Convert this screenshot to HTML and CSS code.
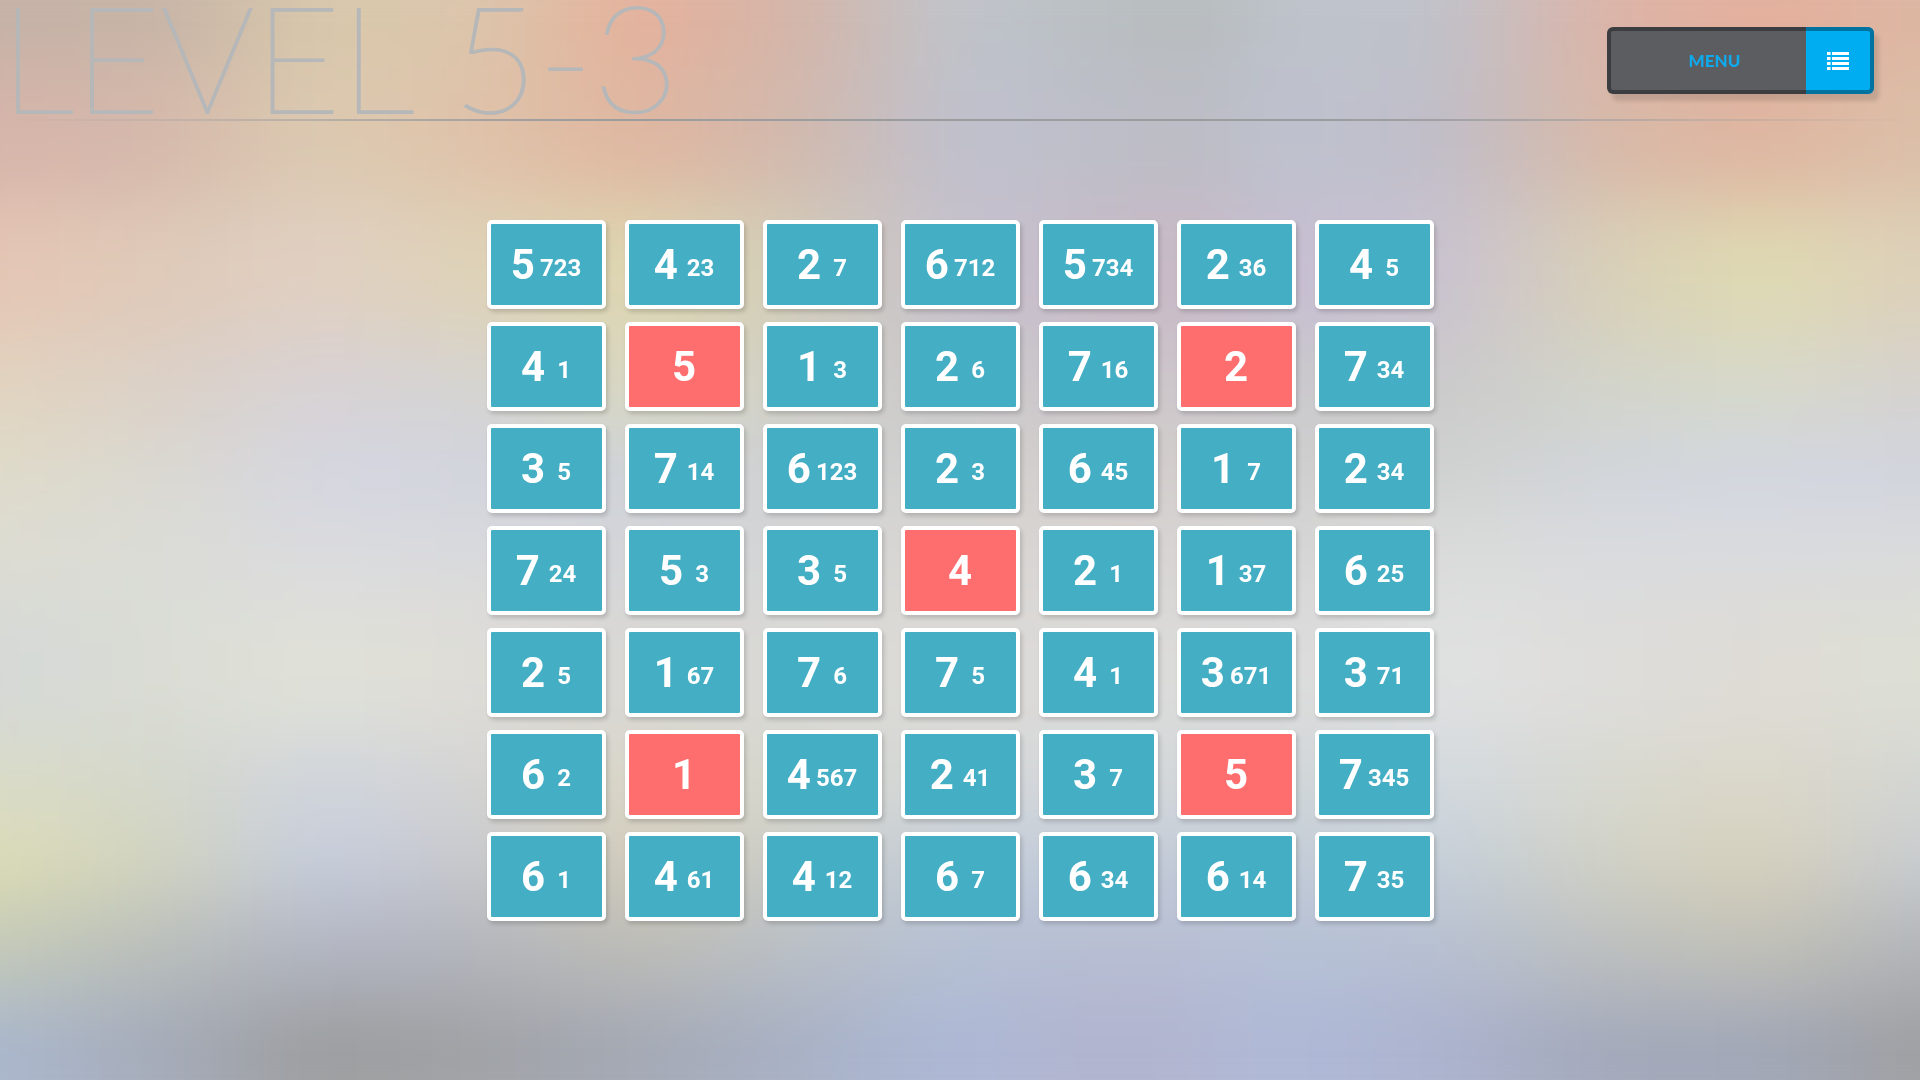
FILE: index.html
```html
<!DOCTYPE html>
<html lang="en">
<head>
<meta charset="utf-8">
<meta name="viewport" content="width=device-width, initial-scale=1">
<title>Level 5-3</title>
<link rel="stylesheet" href="styles.css">
</head>
<body>
<div class="backdrop" aria-hidden="true">
<div class="band band-1"></div><div class="band band-2"></div><div class="band band-3"></div>
<div class="band band-4"></div><div class="band band-5"></div><div class="band band-6"></div>
<div class="band band-7"></div><div class="band band-8"></div><div class="band band-9"></div>
<div class="band band-10"></div><div class="band band-11"></div>
</div>
<header class="header">
<h1 class="title">LEVEL 5-3</h1>
<button class="menu" type="button">
<span class="menu-label">MENU</span>
<span class="menu-icon">
<svg width="22" height="18" viewBox="0 0 22 18" fill="#fff" aria-hidden="true"><path d="M0 0h3.600v3H0zM5 0h17v3H5zM0 5h3.600v3H0zM5 5h17v3H5zM0 10h3.600v3H0zM5 10h17v3H5zM0 15h3.600v3H0zM5 15h17v3H5z"/></svg>
</span>
</button>
</header>
<main class="board">
<button class="tile" type="button">5<span class="moves three">723</span></button>
<button class="tile" type="button">4<span class="moves two">23</span></button>
<button class="tile" type="button">2<span class="moves one">7</span></button>
<button class="tile" type="button">6<span class="moves three">712</span></button>
<button class="tile" type="button">5<span class="moves three">734</span></button>
<button class="tile" type="button">2<span class="moves two">36</span></button>
<button class="tile" type="button">4<span class="moves one">5</span></button>
<button class="tile" type="button">4<span class="moves one">1</span></button>
<button class="tile fixed" type="button">5</button>
<button class="tile" type="button">1<span class="moves one">3</span></button>
<button class="tile" type="button">2<span class="moves one">6</span></button>
<button class="tile" type="button">7<span class="moves two">16</span></button>
<button class="tile fixed" type="button">2</button>
<button class="tile" type="button">7<span class="moves two">34</span></button>
<button class="tile" type="button">3<span class="moves one">5</span></button>
<button class="tile" type="button">7<span class="moves two">14</span></button>
<button class="tile" type="button">6<span class="moves three">123</span></button>
<button class="tile" type="button">2<span class="moves one">3</span></button>
<button class="tile" type="button">6<span class="moves two">45</span></button>
<button class="tile" type="button">1<span class="moves one">7</span></button>
<button class="tile" type="button">2<span class="moves two">34</span></button>
<button class="tile" type="button">7<span class="moves two">24</span></button>
<button class="tile" type="button">5<span class="moves one">3</span></button>
<button class="tile" type="button">3<span class="moves one">5</span></button>
<button class="tile fixed" type="button">4</button>
<button class="tile" type="button">2<span class="moves one">1</span></button>
<button class="tile" type="button">1<span class="moves two">37</span></button>
<button class="tile" type="button">6<span class="moves two">25</span></button>
<button class="tile" type="button">2<span class="moves one">5</span></button>
<button class="tile" type="button">1<span class="moves two">67</span></button>
<button class="tile" type="button">7<span class="moves one">6</span></button>
<button class="tile" type="button">7<span class="moves one">5</span></button>
<button class="tile" type="button">4<span class="moves one">1</span></button>
<button class="tile" type="button">3<span class="moves three">671</span></button>
<button class="tile" type="button">3<span class="moves two">71</span></button>
<button class="tile" type="button">6<span class="moves one">2</span></button>
<button class="tile fixed" type="button">1</button>
<button class="tile" type="button">4<span class="moves three">567</span></button>
<button class="tile" type="button">2<span class="moves two">41</span></button>
<button class="tile" type="button">3<span class="moves one">7</span></button>
<button class="tile fixed" type="button">5</button>
<button class="tile" type="button">7<span class="moves three">345</span></button>
<button class="tile" type="button">6<span class="moves one">1</span></button>
<button class="tile" type="button">4<span class="moves two">61</span></button>
<button class="tile" type="button">4<span class="moves two">12</span></button>
<button class="tile" type="button">6<span class="moves one">7</span></button>
<button class="tile" type="button">6<span class="moves two">34</span></button>
<button class="tile" type="button">6<span class="moves two">14</span></button>
<button class="tile" type="button">7<span class="moves two">35</span></button>
</main>
</body>
</html>
```
FILE: styles.css
```css
* { box-sizing: border-box; }

body {
  margin: 0;
  min-height: 100vh;
  background: #d4d3d1;
  font-family: Roboto, sans-serif;
}

/* Soft colour field: horizontal gradients blended into each other by the blur */
.backdrop {
  position: fixed;
  inset: -68px -160px;
  z-index: -1;
  display: flex;
  flex-direction: column;
  filter: blur(38px);
}
.band { flex: 135; }
.band-1 { background: linear-gradient(90deg, #c5b2a7 0 7.1%, #c6b3a6 14.3%, #d8c8ab 21.4%, #dbc5ab 28.6%, #e6b09b 35.7%, #d3b5a9 42.9%, #bfc4cb 50%, #b6bbbc 60.7%, #bec3cb 64.3%, #bfc2ca 71.4%, #dbb4a8 78.6%, #e5ae9b 85.7%, #dcb6a2 92.9% 100%); }
.band-2 { background: linear-gradient(90deg, #d6b4aa 0 7.1%, #d5b9ab 14.3%, #dccab1 21.4%, #dfc2a9 28.6%, #e0b6a0 35.7%, #d1b9ae 42.9%, #bfc1ce 50%, #bcbcc4 60.7%, #bec2cf 64.3%, #c0bec9 71.4%, #d8b9a8 78.6%, #dfb5a0 85.7%, #dcbfa8 92.9% 100%); }
.band-3 { background: linear-gradient(90deg, #e5c6b5 0 7.1%, #dfcab9 14.3%, #e0d0c3 21.4%, #ded2b7 28.6%, #ddd6b0 35.7%, #d2ccb9 42.9%, #c6c0ce 50%, #c8b9c5 59.5%, #c7bfd4 66%, #c9c2d0 71.4%, #d8cfb8 78.6%, #dfdab2 85.7%, #ddd0ba 92.9% 100%); }
.band-4 { flex: 93; background: linear-gradient(90deg, #e2d3bf 0 7.1%, #dbd1c7 14.3%, #d8d2d5 21.4%, #d5d4d2 28.6%, #d9d8bf 35.7%, #d0cfc7 42.9%, #cac9cc 50%, #cdc5ca 58.5%, #cac9cc 64.3%, #cbcacb 71.4%, #d2d4ca 78.6%, #d7d9ca 85.7%, #d6d2cf 92.9% 100%); }
.band-5 { flex: 80; background: linear-gradient(90deg, #dfdbc9 0 7.1%, #dad8d1 14.3%, #d4d6e1 21.4%, #d1d4de 28.6%, #cdd2d8 35.7%, #cfd0d2 42.9%, #d1d0cf 50%, #d5cdcb 57.1%, #d0cfcf 64.3%, #cfd1cf 71.4%, #d1d5db 78.6%, #d1d6e1 85.7%, #d1d4df 92.9% 100%); }
.band-6 { flex: 90; background: linear-gradient(90deg, #dddcd3 0 7.1%, #dbdcd7 14.3%, #dbdbdf 21.4%, #d9dadd 28.6%, #d3d4d8 35.7%, #d5d5d5 42.9%, #d8d6d3 50%, #d8d4d2 57.1%, #d5d5d5 64.3%, #dbdcda 71.4%, #d9dbde 78.6%, #dadbde 85.7%, #dadbdb 92.9% 100%); }
.band-7 { flex: 142; background: linear-gradient(90deg, #d5d9d6 0 7.1%, #dadcd5 14.3%, #e0e1d8 21.4%, #dedcd7 28.6%, #d8d7d4 35.7%, #d9d9d6 42.9%, #dcdad6 50%, #dbdbda 57.1%, #dbdbdb 64.3%, #e0e1e1 71.4%, #dedddb 78.6%, #dedbd5 85.7%, #dddfd5 92.9% 100%); }
.band-8 { flex: 90; background: linear-gradient(90deg, #dadbc6 0 7.1%, #d4d7ca 14.3%, #cfd4de 21.4%, #d3d3d2 28.6%, #dad5c4 35.7%, #d6d6cd 42.9%, #d3d7da 50%, #d3d7da 57.1%, #cfd6d7 64.3%, #d1d8df 71.4%, #d7d8cf 78.6%, #dbd7c8 85.7%, #d3d5d3 92.9% 100%); }
.band-9 { flex: 75; background: linear-gradient(90deg, #dcdcb2 0 7.1%, #d1d3be 14.3%, #c4cbdd 21.4%, #c6c7cb 28.6%, #d0c9b6 35.7%, #c7cbc8 42.9%, #c1cbd9 50%, #bfc9d8 57.1%, #c1cad7 64.3%, #c4ced9 71.4%, #cfd0c4 78.6%, #d7d0ba 85.7%, #c6cbd1 92.9% 100%); }
.band-10 { flex: 90; background: linear-gradient(90deg, #c3c9b9 0 7.1%, #b8bdbb 14.3%, #b1b5c2 21.4%, #b3b5bc 28.6%, #bcbcb6 35.7%, #b9bfc6 42.9%, #b5c0d4 50%, #b7bdd2 57.1%, #b6c0d6 64.3%, #b6bfd1 71.4%, #bcbfbf 78.6%, #c0c0b7 85.7%, #b1b4b8 92.9% 100%); }
.band-11 { flex: 151; background: linear-gradient(90deg, #aab7cd 0 7.1%, #a5abb9 14.3%, #9c9d9e 21.4%, #a0a2a6 28.6%, #a4a9b5 35.7%, #a8b1c5 42.9%, #adb8d6 50%, #b2b3cd 57.1%, #afb9d7 64.3%, #acb3cf 71.4%, #a3a9ba 78.6%, #a1a7b8 85.7%, #9e9fa1 92.9% 100%); }

.header {
  display: flex;
  justify-content: space-between;
  align-items: flex-start;
  height: 121px;
  padding: 0 46px 0 0;
  background: linear-gradient(90deg, transparent, #9b9c9e 30%, #9b9c9e 70%, transparent) bottom / 100% 2px no-repeat;
}

.title {
  margin: 0;
  font: 100 148px/112px Lato, sans-serif;
  color: #b5b7b8;
  -webkit-text-stroke: 2px #b5b7b8;
  white-space: nowrap;
}

.menu {
  position: relative;
  display: flex;
  width: 267px;
  height: 67px;
  margin: 27px 0 0;
  padding: 0;
  border: 0;
  border-radius: 6px;
  overflow: hidden;
  background: #5c5d61;
  box-shadow: 5px 7px 4px rgba(0, 0, 0, .12);
  font: 900 17px/24px Lato, sans-serif;
  color: #0fa9ec;
  cursor: pointer;
}
.menu::after {
  content: "";
  position: absolute;
  inset: 0;
  border: 4px solid rgba(0, 0, 0, .34);
  border-radius: 6px;
}
.menu-label {
  flex: 1;
  align-self: center;
  padding-left: 16px;
  text-align: center;
}
.menu-icon {
  display: flex;
  align-items: center;
  align-self: stretch;
  width: 68px;
  padding-left: 21px;
  background: #00adf1;
}

.board {
  display: grid;
  grid-template-columns: repeat(7, 119px);
  gap: 13px 19px;
  justify-content: center;
  padding: 99px 0;
}
.tile {
  height: 89px;
  padding: 0;
  border: 4px solid #fff;
  border-radius: 5px;
  background: #44aec4;
  box-shadow: 2px 3px 4px rgba(0, 0, 0, .16);
  font: 700 42px/81px Roboto, sans-serif;
  color: #fff;
  white-space: nowrap;
  cursor: pointer;
}
.fixed { background: #ff6e6e; }
.moves {
  display: inline-block;
  vertical-align: middle;
  font-size: 24px;
  line-height: 30px;
}
.one { padding-left: 12px; }
.two { padding-left: 9px; }
.three { padding-left: 5px; }
```
